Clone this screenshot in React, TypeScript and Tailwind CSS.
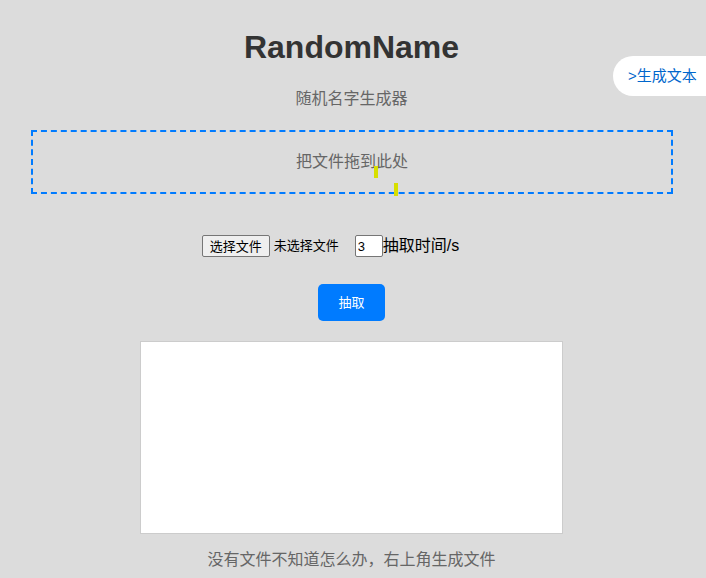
const cjk = "font-['Liberation_Sans','Noto_Sans_CJK_SC',sans-serif]";

export default function App() {
  return (
    <div className={`relative min-h-[578px] bg-[#dcdcdc] pr-[3px] ${cjk} text-[#333]`}>
      <a
        href="#"
        className="absolute right-0 top-[56px] flex h-[40px] w-[93px] items-center rounded-l-[20px] bg-white pl-[15px] text-[15px] text-[#0066cc]"
      >
        &gt;生成文本
      </a>

      <h1 className="pt-[29px] text-center text-[32px] font-bold leading-[37px] text-[#333]">
        RandomName
      </h1>
      <p className="mt-[22px] text-center text-[16px] leading-[22px] text-[#666]">
        随机名字生成器
      </p>

      <div className="relative ml-[31px] mt-[20px] flex h-[64px] w-[642px] items-center justify-center border-2 border-dashed border-[#007bff] text-[16px] text-[#666]">
        把文件拖到此处
        <span className="absolute left-[341px] top-[34px] h-[12px] w-[4px] bg-[#d7df00]" />
        <span className="absolute left-[361px] top-[51px] h-[13px] w-[4px] bg-[#d7df00]" />
      </div>

      <div className="mt-[41px] flex h-[22px] items-center justify-center pr-[42px] text-[13px] text-black">
        <button className="h-[22px] rounded-[2px] border border-[#767676] bg-[#efefef] px-[7px] text-[13px] leading-none">
          选择文件
        </button>
        <span className="ml-[4px]">未选择文件</span>
        <input
          type="number"
          defaultValue={3}
          className="ml-[16px] h-[22px] w-[28px] rounded-[2px] border border-[#767676] bg-white px-[2px] text-[13px]"
        />
        <span className="text-[16px]">抽取时间/s</span>
      </div>

      <div className="mt-[27px] flex justify-center">
        <button className="h-[37px] w-[67px] rounded-[5px] bg-[#007bff] text-[13px] text-white">
          抽取
        </button>
      </div>

      <div className="mx-auto mt-[20px] h-[193px] w-[423px] border border-[#cccccc] bg-white" />

      <p className="mt-[15px] text-center text-[16px] leading-[22px] text-[#666]">
        没有文件不知道怎么办，右上角生成文件
      </p>
    </div>
  );
}
